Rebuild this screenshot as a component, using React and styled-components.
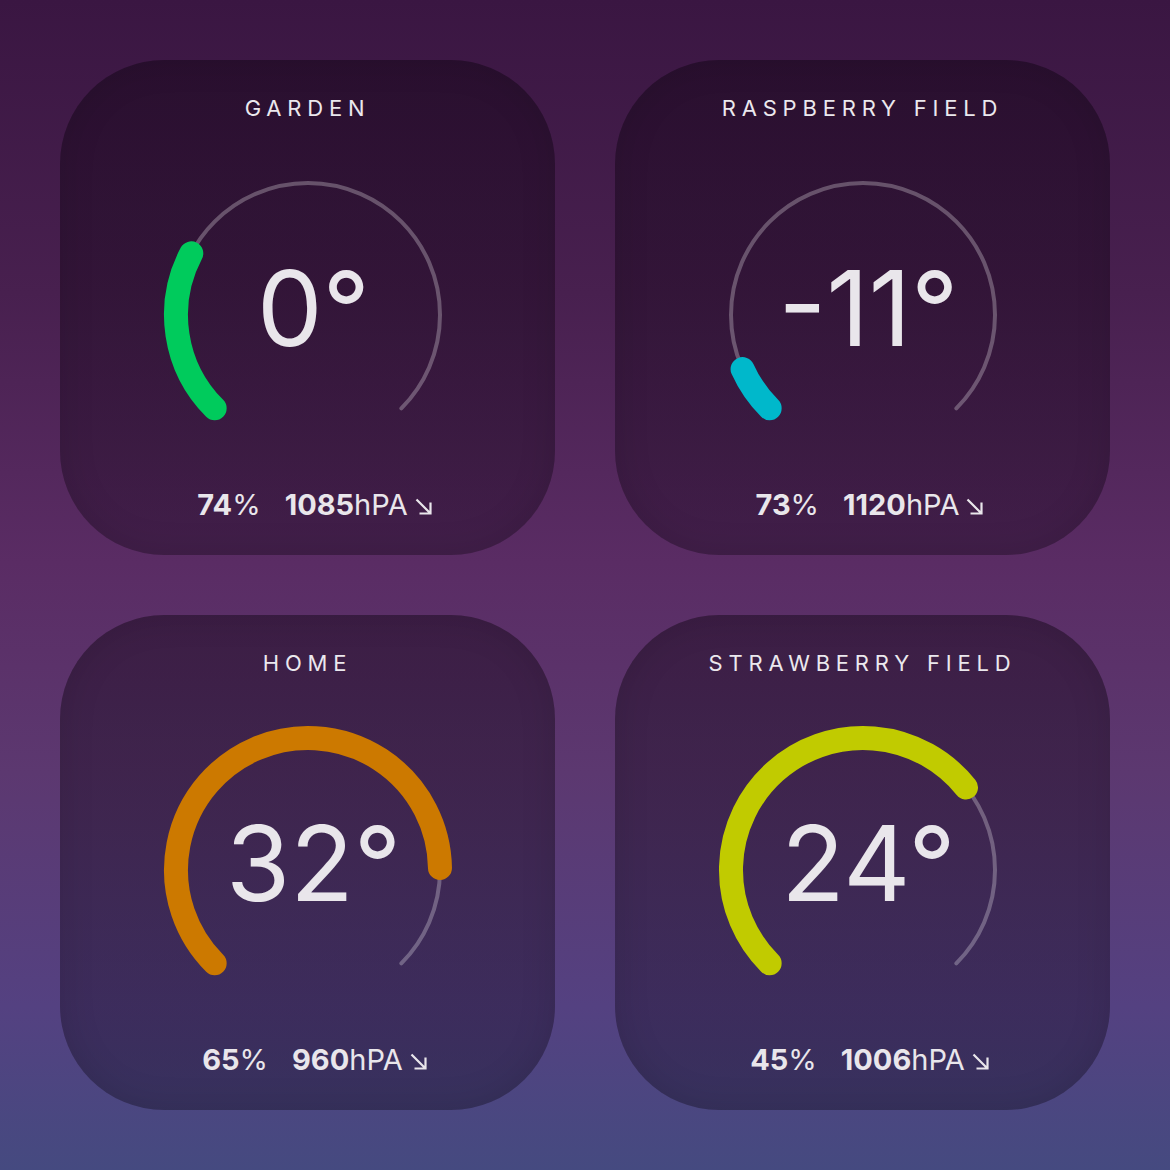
import React from "react";
import styled, { createGlobalStyle } from "styled-components";

const Global = createGlobalStyle`
  html, body { margin: 0; padding: 0; }
  body {
    width: 1170px;
    min-height: 1170px;
    background: linear-gradient(180deg, #3a1642 0%, #48204f 25%, #5a2c64 48%, #5c3870 66%, #544181 86%, #454a80 100%);
    font-family: Inter, "Noto Sans", sans-serif;
    color: #e9e6eb;
  }
`;

const Grid = styled.div`
  display: grid;
  grid-template-columns: 495px 495px;
  grid-auto-rows: 495px;
  gap: 60px;
  padding: 60px;
`;

const Card = styled.div`
  border-radius: 104px;
  background: linear-gradient(180deg, rgba(10, 0, 12, 0.38) 0%, rgba(10, 0, 14, 0.3) 100%);
  box-shadow: inset 0 0 36px rgba(0, 0, 0, 0.12);
  display: flex;
  flex-direction: column;
  align-items: center;
  padding-top: 34px;
  box-sizing: border-box;
`;

const Title = styled.div`
  font-size: 22px;
  line-height: 28px;
  font-weight: 400;
  letter-spacing: 5.8px;
  text-transform: uppercase;
  color: #ebe8ee;
`;

const GaugeWrap = styled.div`
  position: relative;
  width: 300px;
  height: 300px;
  margin-top: 43px;
`;

const GaugeSvg = styled.svg`
  display: block;
`;

const Temp = styled.div`
  position: absolute;
  inset: 0;
  display: flex;
  align-items: center;
  justify-content: center;
  font-size: 104px;
  line-height: 1;
  font-weight: 400;
  color: #e9e6eb;
  padding-left: 12px;
  padding-bottom: 14px;
  box-sizing: border-box;
`;

const Stats = styled.div`
  margin-top: 21px;
  display: flex;
  align-items: center;
  gap: 24px;
  height: 36px;
  font-size: 29px;
  color: #e9e6eb;
  padding-left: 14px;
`;

const Stat = styled.span`
  display: inline-flex;
  align-items: center;
`;

const Bold = styled.b`
  font-weight: 700;
`;

const Light = styled.span`
  font-weight: 400;
`;

const Arrow = styled.svg`
  margin-left: 7px;
  margin-top: 5px;
`;

const CX = 150;
const CY = 150;
const R = 132;

function pt(a) {
  const rad = (a * Math.PI) / 180;
  return [CX + R * Math.cos(rad), CY + R * Math.sin(rad)];
}

function arc(from, to) {
  const [x1, y1] = pt(from);
  const [x2, y2] = pt(to);
  const large = to - from > 180 ? 1 : 0;
  return `M ${x1.toFixed(2)} ${y1.toFixed(2)} A ${R} ${R} 0 ${large} 1 ${x2.toFixed(2)} ${y2.toFixed(2)}`;
}

function Gauge({ temp, color }) {
  const frac = Math.max(0, Math.min(1, (temp + 15.4) / 57.1));
  const end = 135 + 270 * frac;
  return (
    <GaugeWrap>
      <GaugeSvg width="300" height="300" viewBox="0 0 300 300">
        <path d={arc(135, 405)} fill="none" stroke="rgba(255,255,255,0.27)" strokeWidth="4" strokeLinecap="round" />
        <path d={arc(135, end)} fill="none" stroke={color} strokeWidth="24" strokeLinecap="round" />
      </GaugeSvg>
      <Temp>{temp < 0 ? `-${Math.abs(temp)}` : temp}°</Temp>
    </GaugeWrap>
  );
}

const data = [
  { name: "Garden", temp: 0, color: "#00cb5c", hum: 74, pres: 1085 },
  { name: "Raspberry Field", temp: -11, color: "#00b8cb", hum: 73, pres: 1120 },
  { name: "Home", temp: 32, color: "#cc7900", hum: 65, pres: 960 },
  { name: "Strawberry Field", temp: 24, color: "#c1cb00", hum: 45, pres: 1006 },
];

export default function App() {
  return (
    <>
      <Global />
      <Grid>
        {data.map((d) => (
          <Card key={d.name}>
            <Title>{d.name}</Title>
            <Gauge temp={d.temp} color={d.color} />
            <Stats>
              <Stat>
                <Bold>{d.hum}</Bold>
                <Light>%</Light>
              </Stat>
              <Stat>
                <Bold>{d.pres}</Bold>
                <Light>hPA</Light>
                <Arrow width="17" height="17" viewBox="0 0 17 17">
                  <path d="M1.5 1.5 L15 15 M4.5 15.5 H15.5 V4.5" fill="none" stroke="#e9e6eb" strokeWidth="2.2" />
                </Arrow>
              </Stat>
            </Stats>
          </Card>
        ))}
      </Grid>
    </>
  );
}
